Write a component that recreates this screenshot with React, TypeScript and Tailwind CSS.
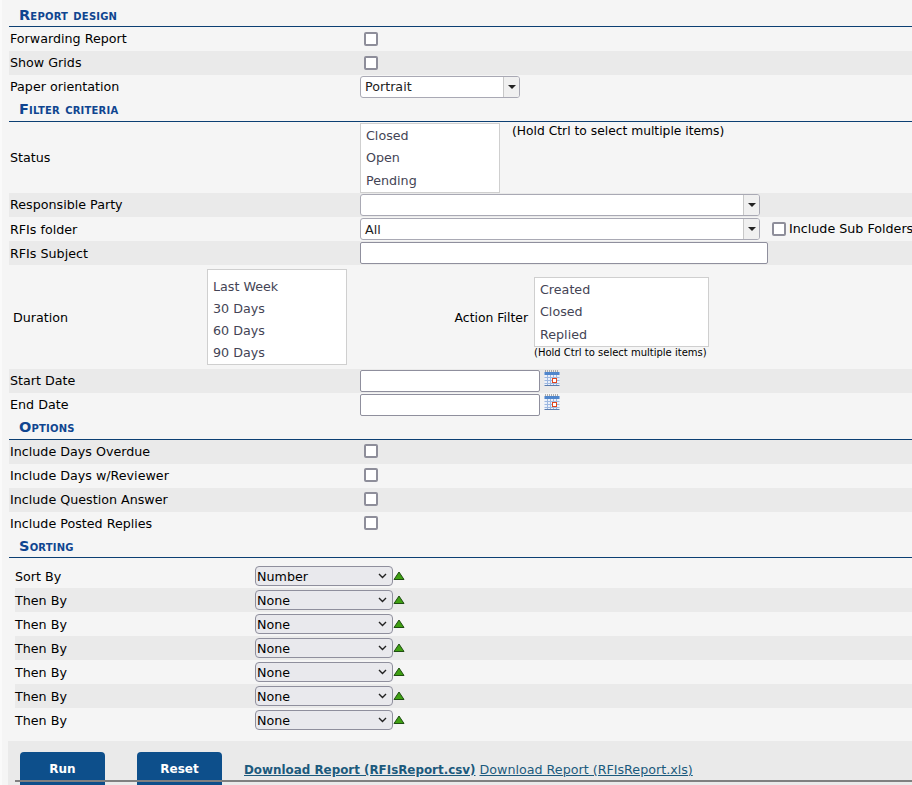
import React from "react";

const font = "[font-family:'DejaVu_Sans',Verdana,sans-serif]";

function Heading({ children, h = "h-[23px]", pb = "pb-[1px]" }: { children: React.ReactNode; h?: string; pb?: string }) {
  return (
    <div className={`${h} ${pb} border-b border-[#0c3f73] pl-[10px] flex items-center`}>
      <span className="font-bold text-[14.5px] leading-none [font-variant:small-caps] text-[#0f4590] tracking-[0.2px]">{children}</span>
    </div>
  );
}

function Check({ up }: { up?: boolean }) {
  return <span className={`block w-[14px] h-[14px] bg-white border-2 border-[#8e8e9a] rounded-[2px] shrink-0 ${up ? "-mt-[2px]" : ""}`} />;
}

function Row({ label, grey, children, drop }: { label: string; grey?: boolean; children?: React.ReactNode; drop?: boolean }) {
  return (
    <div className={`h-6 flex items-center ${grey ? "bg-[#eaeaea]" : ""}`}>
      <div className={`w-[351px] shrink-0 pl-[1px] text-black truncate ${drop ? "pt-[2px]" : ""}`}>{label}</div>
      {children}
    </div>
  );
}

function Combo({ w, value, leading = "leading-[20px]" }: { w: string; value?: string; leading?: string }) {
  return (
    <div className={`${w} h-[22px] shrink-0 flex bg-white border border-[#a9a9b4] rounded-[3px] overflow-hidden`}>
      <div className={`flex-1 pl-1 ${leading} text-[#222] truncate`}>{value}</div>
      <div className="w-4 bg-[#f0f0f0] border-l border-[#c8c8c8] flex items-center justify-center">
        <span className="block w-0 h-0 border-l-[4px] border-r-[4px] border-t-[4px] border-l-transparent border-r-transparent border-t-[#222]" />
      </div>
    </div>
  );
}

function TextBox({ w }: { w: string }) {
  return <div className={`${w} h-[22px] shrink-0 bg-white border border-[#8f8f9d] rounded-[2px]`} />;
}

function ListBox({ items, w, pt = "pt-[1px]", rowH = "h-[22.3px] leading-[22.3px]" }: { items: string[]; w: string; pt?: string; rowH?: string }) {
  return (
    <div className={`${w} ${pt} bg-white border border-[#cfcfcf] px-[5px] text-[#444455] flex flex-col`}>
      {items.map((t) => (
        <div key={t} className={rowH}>{t}</div>
      ))}
    </div>
  );
}

function Calendar() {
  return (
    <svg width="16" height="16" viewBox="0 0 16 16" className="ml-1 -mt-[6px] shrink-0">
      <rect x="0.5" y="2" width="15" height="14" fill="#eaf0fa" />
      <rect x="0.5" y="2" width="15" height="3" fill="#4f86cc" />
      <path d="M1 1h14" stroke="#666" strokeWidth="1" strokeDasharray="1 1" />
      <path d="M0.5 7.5h15M0.5 10.5h15M0.5 13.5h15M3.5 5v11M6.5 5v11M9.5 5v11M12.5 5v11" stroke="#9db8e0" strokeWidth="1" />
      <path d="M0.5 15.5h15" stroke="#5a7cae" strokeWidth="1" />
      <rect x="8.5" y="8.5" width="4" height="4" fill="#fff" stroke="#e0451f" strokeWidth="1" />
    </svg>
  );
}

function Arrow() {
  return (
    <svg width="12" height="10" viewBox="0 0 12 10" className="shrink-0">
      <path d="M6 1 L11 8.5 H1 Z" fill="#3fa012" stroke="#1f4d12" strokeWidth="1" strokeLinejoin="round" />
    </svg>
  );
}

function SortRow({ label, value, grey }: { label: string; value: string; grey?: boolean }) {
  return (
    <div className={`h-6 flex items-center ${grey ? "bg-[#eaeaea]" : ""}`}>
      <div className="w-[240px] pt-[2px] text-black">{label}</div>
      <div className="w-[138px] h-[20px] -mt-[1px] box-border bg-[#e9e9ed] border border-[#8f8f9d] rounded-[4px] flex items-center pl-[1px] pr-[5px] justify-between">
        <span className="text-black pt-[2px]">{value}</span>
        <svg width="9" height="6" viewBox="0 0 9 6"><path d="M1 1l3.5 3.5L8 1" fill="none" stroke="#222" strokeWidth="1.4" /></svg>
      </div>
      <Arrow />
    </div>
  );
}

export default function App() {
  return (
    <div className={`${font} w-[912px] h-[785px] overflow-hidden bg-[#f5f5f5] border-l-2 border-l-[#fafafa] text-[12.7px] relative`}>
      <div className="pl-[7px] pt-[4px]">
        <Heading pb="pb-0">Report design</Heading>
        <Row label="Forwarding Report"><span className="ml-[4px]"><Check /></span></Row>
        <Row label="Show Grids" grey><span className="ml-[4px]"><Check /></span></Row>
        <Row label="Paper orientation"><Combo w="w-[160px]" value="Portrait" /></Row>
        <Heading>Filter criteria</Heading>
        <div className="h-[71px] flex items-center">
          <div className="w-[351px] pl-[1px]">Status</div>
          <div className="self-start mt-[1px]">
            <ListBox w="w-[140px]" items={["Closed", "Open", "Pending"]} />
          </div>
          <div className="self-start ml-[12px] text-[12.3px] leading-[16px] mt-[1px] text-black">(Hold Ctrl to select multiple items)</div>
        </div>
        <Row label="Responsible Party" grey><Combo w="w-[400px]" /></Row>
        <Row label="RFIs folder" drop>
          <Combo w="w-[400px]" value="All" leading="leading-[22px]" />
          <span className="ml-[12px]"><Check /></span>
          <span className="ml-[3px] whitespace-nowrap text-black">Include Sub Folders</span>
        </Row>
        <Row label="RFIs Subject" grey drop><TextBox w="w-[408px]" /></Row>
        <div className="h-[104px] flex items-center">
          <div className="w-[198px] pl-[4px] pt-[2px]">Duration</div>
          <div className="self-start mt-[4px]">
            <ListBox w="w-[140px]" pt="pt-[6px]" rowH="h-[22px] leading-[22px]" items={["Last Week", "30 Days", "60 Days", "90 Days"]} />
          </div>
          <div className="w-[187px] text-right pr-[6px] pt-[2px] text-[12.4px] text-black">Action Filter</div>
          <div className="self-start mt-[12px] w-[175px]">
            <ListBox w="w-[175px]" pt="pt-[1px]" rowH="h-[22.4px] leading-[22.4px]" items={["Created", "Closed", "Replied"]} />
            <div className="text-[10px] leading-[12px] whitespace-nowrap text-black">(Hold Ctrl to select multiple items)</div>
          </div>
        </div>
        <Row label="Start Date" grey><TextBox w="w-[180px]" /><Calendar /></Row>
        <Row label="End Date"><TextBox w="w-[180px]" /><Calendar /></Row>
        <Heading>Options</Heading>
        <Row label="Include Days Overdue" grey><span className="ml-[4px]"><Check up /></span></Row>
        <Row label="Include Days w/Reviewer"><span className="ml-[4px]"><Check up /></span></Row>
        <Row label="Include Question Answer" grey><span className="ml-[4px]"><Check up /></span></Row>
        <Row label="Include Posted Replies"><span className="ml-[4px]"><Check up /></span></Row>
        <Heading h="h-[22px]">Sorting</Heading>
        <div className="pl-[6px] pt-[6px]">
          <SortRow label="Sort By" value="Number" />
          <SortRow label="Then By" value="None" grey />
          <SortRow label="Then By" value="None" />
          <SortRow label="Then By" value="None" grey />
          <SortRow label="Then By" value="None" />
          <SortRow label="Then By" value="None" grey />
          <SortRow label="Then By" value="None" />
        </div>
        <div className="mt-[9px] -ml-[1px] h-[60px] bg-[#eaeaea] pl-[12px] pt-[11px] flex items-start">
          <button className="w-[85px] h-[40px] bg-[#0d4f8b] text-white font-bold rounded-t-[4px] pb-[6px] text-[12px]">Run</button>
          <button className="ml-[32px] w-[85px] h-[40px] bg-[#0d4f8b] text-white font-bold rounded-t-[4px] pb-[6px] text-[12px]">Reset</button>
          <a className="ml-[22px] mt-[10px] font-bold text-[11.9px] leading-[17px] underline text-[#1c5a7d] whitespace-nowrap">Download Report (RFIsReport.csv)</a>
          <a className="ml-[4px] mt-[9px] text-[12.7px] leading-[17px] underline text-[#1c5a7d] whitespace-nowrap">Download Report (RFIsReport.xls)</a>
        </div>
      </div>
      <div className="absolute left-[13px] right-0 top-[780px] h-[2px] bg-[#808080]" />
    </div>
  );
}
